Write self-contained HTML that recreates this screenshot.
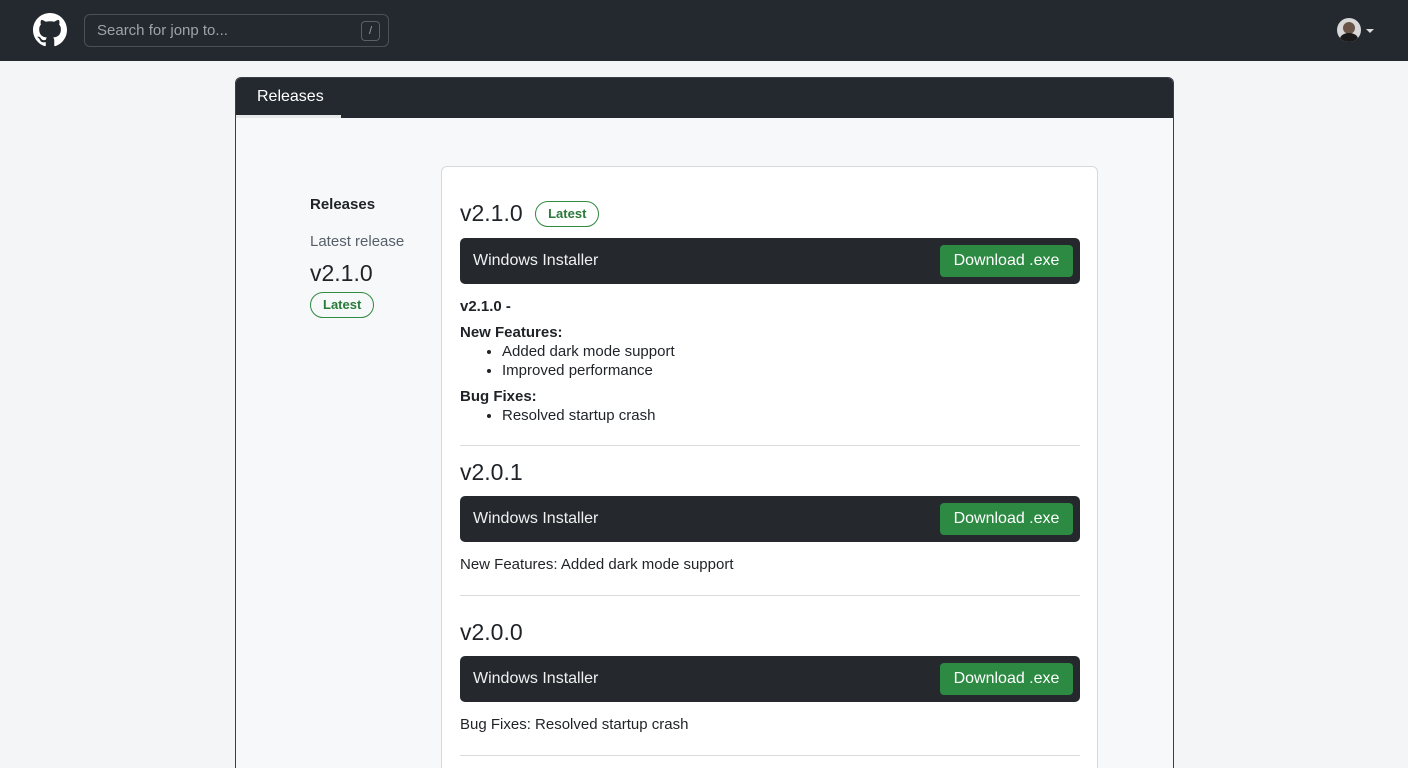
<!DOCTYPE html>
<html style="overflow:hidden"><head><style>
*{box-sizing:border-box;margin:0;padding:0}
html,body{width:1408px;height:768px;overflow:hidden}
body{background:#f3f5f7;font-family:"Liberation Sans",sans-serif;color:#1f2328;position:relative}
.hdr{position:absolute;left:0;top:0;width:1408px;height:61px;background:#24292f}
.search{position:absolute;left:84px;top:14px;width:305px;height:33px;border:1px solid #4a5057;border-radius:6px;color:#9ca3ab;font-size:15px;line-height:31px;padding-left:12px}
.slash{position:absolute;right:8px;top:6px;width:19px;height:20px;border:1px solid #5a6067;border-radius:4px;font-size:11px;line-height:18px;text-align:center}
.panel{position:absolute;left:235px;top:77px;width:939px;height:720px;background:#f6f8fa;border:1px solid #3a3f45;border-radius:6px;overflow:hidden}
.tabbar{height:40px;background:#24292f;position:relative}
.tab{position:absolute;left:0;top:0;width:105px;height:40px;color:#fff;font-size:16px;line-height:38px;padding-left:21px;border-bottom:3px solid #e6e8ea}
.side{position:absolute;left:310px;font-size:15px}
.badge{display:inline-block;border:1px solid #2f8a42;color:#2a7a3a;border-radius:14px;font-size:13px;font-weight:bold;height:26px;line-height:24px;padding:0 12px}
.card{position:absolute;left:441px;top:166px;width:657px;height:640px;background:#fff;border:1px solid #d6dade;border-radius:6px}
.rel{position:absolute;left:18px;width:620px}
.ver{font-size:23px;color:#1f2328}
.bar{height:46px;background:#25292e;border-radius:5px;color:#f0f0f0;font-size:16px;line-height:46px;padding-left:13px}
.dl{position:absolute;right:7px;top:7px;width:133px;height:32px;background:#2d8a43;border-radius:4px;color:#fff;text-align:center;line-height:32px;font-size:16px}
.hr{position:absolute;left:18px;width:620px;height:1px;background:#d8dcdf}
.txt{font-size:15px;line-height:19px}
ul{margin-left:42px}
</style></head><body>
<div class="hdr">
<svg style="position:absolute;left:33px;top:13px" width="34" height="34" viewBox="0 0 16 16"><path fill="#fff" d="M8 0C3.58 0 0 3.580 0 8c0 3.54 2.29 6.53 5.47 7.59.4.07.55-.17.55-.38 0-.19-.01-.82-.01-1.49-2.01.37-2.530-.49-2.69-.94-.09-.23-.48-.94-.82-1.13-.28-.15-.68-.52-.01-.53.63-.01 1.08.58 1.23.82.72 1.21 1.87.87 2.33.66.07-.52.28-.87.51-1.07-1.78-.2-3.64-.89-3.64-3.95 0-.87.31-1.59.82-2.15-.08-.2-.36-1.02.08-2.12 0 0 .67-.21 2.2.82.64-.18 1.32-.27 2-.27.68 0 1.36.09 2 .27 1.53-1.04 2.2-.82 2.2-.82.44 1.1.16 1.92.08 2.12.51.56.82 1.27.82 2.15 0 3.07-1.87 3.75-3.65 3.95.29.25.54.73.54 1.48 0 1.07-.01 1.93-.01 2.2 0 .21.15.46.55.38A8.013 8.013 0 0016 8c0-4.42-3.58-8-8-8z"/></svg>
<div class="search">Search for jonp to...<div class="slash">/</div></div>
<div style="position:absolute;left:1337px;top:18px;width:24px;height:24px;border-radius:50%;background:#d8d8d8;overflow:hidden"><div style="position:absolute;left:6px;top:4px;width:12px;height:12px;border-radius:50%;background:#6a5548"></div><div style="position:absolute;left:3px;top:15px;width:18px;height:12px;border-radius:50%;background:#1a1a1a"></div></div>
<div style="position:absolute;left:1366px;top:29px;border-left:4px solid transparent;border-right:4px solid transparent;border-top:4px solid #ddd"></div>
</div>
<div class="panel"><div class="tabbar"><div class="tab">Releases</div></div></div>
<div class="side" style="top:196px;font-weight:bold">Releases</div>
<div class="side" style="top:233px;color:#57606a">Latest release</div>
<div class="side" style="top:260px;font-size:23px">v2.1.0</div>
<div class="side" style="top:292px"><span class="badge">Latest</span></div>
<div class="card">
<div class="rel" style="top:33px"><span class="ver">v2.1.0</span> <span class="badge" style="margin-left:8px;vertical-align:3px">Latest</span></div>
<div class="rel bar" style="top:71px">Windows Installer<div class="dl">Download .exe</div></div>
<div class="rel txt" style="top:130px"><b>v2.1.0 -</b><div style="height:7px"></div><b>New Features:</b><ul><li>Added dark mode support</li><li>Improved performance</li></ul><div style="height:7px"></div><b>Bug Fixes:</b><ul><li>Resolved startup crash</li></ul></div>
<div class="hr" style="top:278px"></div>
<div class="rel ver" style="top:292px">v2.0.1</div>
<div class="rel bar" style="top:329px">Windows Installer<div class="dl">Download .exe</div></div>
<div class="rel txt" style="top:388px">New Features: Added dark mode support</div>
<div class="hr" style="top:428px"></div>
<div class="rel ver" style="top:452px">v2.0.0</div>
<div class="rel bar" style="top:489px">Windows Installer<div class="dl">Download .exe</div></div>
<div class="rel txt" style="top:548px">Bug Fixes: Resolved startup crash</div>
<div class="hr" style="top:588px"></div>
</div>
</body></html>
